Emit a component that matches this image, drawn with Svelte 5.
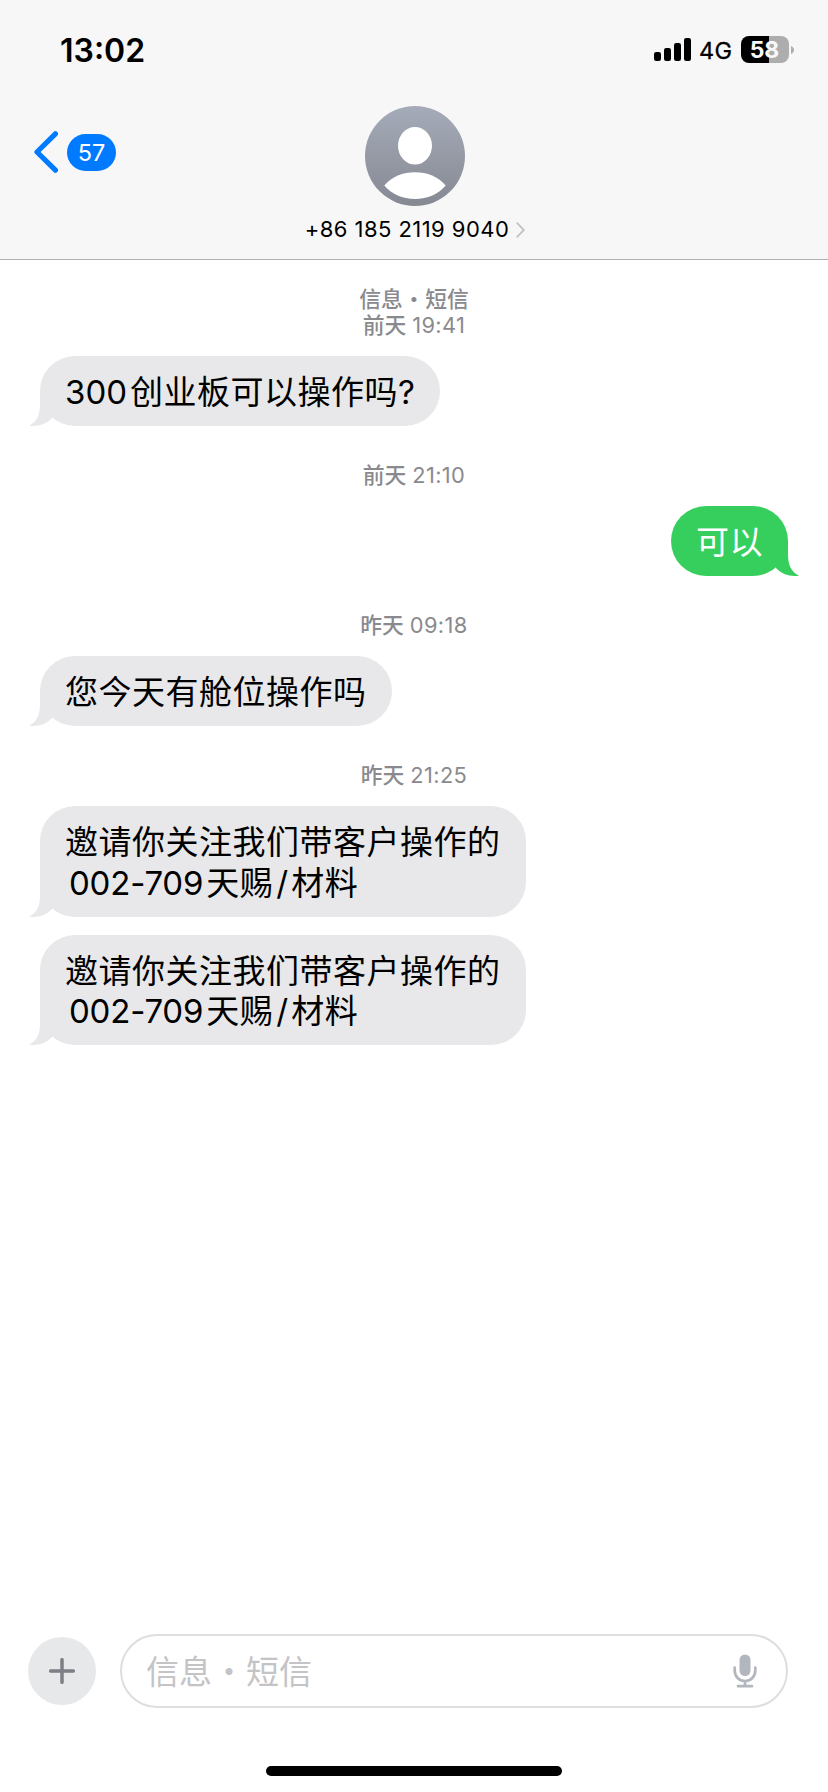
<script lang="ts">
  type Run = { text: string; latin?: boolean; cls?: string };
  type Bubble = { from: "me" | "them"; lines: Run[][] };
  type Group = { service?: string; day: string; time: string; bubbles: Bubble[] };

  const invite: Bubble = {
    from: "them",
    lines: [
      [{ text: "邀请你关注我们带客户操作的" }],
      [
        { text: "002-709", latin: true, cls: "code" },
        { text: "天赐" },
        { text: "/", latin: true, cls: "slash" },
        { text: "材料" },
      ],
    ],
  };

  const groups: Group[] = [
    {
      service: "信息 • 短信",
      day: "前天",
      time: "19:41",
      bubbles: [
        {
          from: "them",
          lines: [
            [
              { text: "300", latin: true, cls: "lead" },
              { text: "创业板可以操作吗" },
              { text: "?", latin: true },
            ],
          ],
        },
      ],
    },
    {
      day: "前天",
      time: "21:10",
      bubbles: [{ from: "me", lines: [[{ text: "可以" }]] }],
    },
    {
      day: "昨天",
      time: "09:18",
      bubbles: [{ from: "them", lines: [[{ text: "您今天有舱位操作吗" }]] }],
    },
    { day: "昨天", time: "21:25", bubbles: [invite, invite] },
  ];

  // bar heights of the signal meter, weakest first
  const bars = [9, 13, 18, 23];
</script>

<div class="screen">
  <header>
    <div class="status">
      <span class="clock">13:02</span>
      <div class="indicators">
        <svg class="signal" width="37" height="23" viewBox="0 0 37 23">
          {#each bars as h, i}
            <rect x={i * 10} y={23 - h} width="7" height={h} rx="2.2" />
          {/each}
        </svg>
        <span class="network">4G</span>
        <div class="battery">
          <span class="level">58</span>
        </div>
        <svg class="nub" width="3" height="8" viewBox="0 0 3 8">
          <path d="M0 0C2 .8 3 2.3 3 4S2 7.2 0 8Z" fill="#adadad" />
        </svg>
      </div>
    </div>

    <div class="nav">
      <button class="back" aria-label="back">
        <svg width="24" height="42" viewBox="0 0 24 42">
          <path
            d="M21.4 2.8L3 21l18.4 18.2"
            fill="none"
            stroke="#007aff"
            stroke-width="5.2"
            stroke-linecap="round"
            stroke-linejoin="round"
          />
        </svg>
        <span class="unread">57</span>
      </button>

      <div class="contact">
        <svg width="100" height="100" viewBox="0 0 100 100">
          <defs>
            <linearGradient id="avatar" x1="0" y1="0" x2="0" y2="1">
              <stop offset="0" stop-color="#a5abb9" />
              <stop offset="1" stop-color="#858992" />
            </linearGradient>
          </defs>
          <circle cx="50" cy="50" r="50" fill="url(#avatar)" />
          <ellipse cx="50" cy="39.8" rx="17" ry="18.8" fill="#fff" />
          <path
            d="M19.3 79.6C26.5 70.5 38 66.2 50 66.2S73.5 70.5 80.7 79.6C73.5 88.3 62.5 93 50 93S26.5 88.3 19.3 79.6Z"
            fill="#fff"
          />
        </svg>
        <div class="number">
          <span>+86 185 2119 9040</span>
          <svg width="9" height="16" viewBox="0 0 9 16">
            <path
              d="M1.2 1.2L7.8 8L1.2 14.8"
              fill="none"
              stroke="#c4c4c6"
              stroke-width="1.9"
              stroke-linecap="round"
              stroke-linejoin="round"
            />
          </svg>
        </div>
      </div>
    </div>
  </header>

  <main>
    {#each groups as group}
      <section>
        <div class="stamp">
          {#if group.service}<div class="service">{group.service}</div>{/if}
          <div>{group.day} <span class="time">{group.time}</span></div>
        </div>
        <div class="stack">
          {#each group.bubbles as bubble}
            <div class="bubble {bubble.from}">
              {#each bubble.lines as line}
                <div class="line">
                  {#each line as run}<span class={run.cls} class:latin={run.latin}>{run.text}</span>{/each}
                </div>
              {/each}
              <svg class="tail" width="26" height="36" viewBox="0 0 26 36">
                <path d="M11 0V14C11 24 8.5 31.5 0 35.7C9 37 17.5 34 23 28L26 0Z" />
              </svg>
            </div>
          {/each}
        </div>
      </section>
    {/each}
  </main>

  <footer>
    <div class="compose">
      <button class="add" aria-label="add">
        <svg width="26" height="26" viewBox="0 0 26 26">
          <path d="M13 1.7V24.3M1.7 13H24.3" stroke="#7e7e85" stroke-width="3.5" stroke-linecap="round" />
        </svg>
      </button>
      <div class="field">
        <span class="placeholder">信息 • 短信</span>
        <svg width="24" height="34" viewBox="0 0 24 34">
          <rect x="6.5" y="0.5" width="11" height="21.5" rx="5.5" fill="#b2b6bd" />
          <path
            d="M1.7 13.5V16.5C1.7 22.6 6 27 12 27S22.3 22.6 22.3 16.5V13.5M12 27V32M5 32.2H19"
            fill="none"
            stroke="#b2b6bd"
            stroke-width="2.7"
            stroke-linecap="round"
          />
        </svg>
      </div>
    </div>
    <div class="home"></div>
  </footer>
</div>

<style>
  :global(body) {
    margin: 0;
    background: #fff;
  }

  .screen {
    display: flex;
    flex-direction: column;
    width: 828px;
    height: 1792px;
    background: #fff;
    color: #000;
    font-family: Inter, "Noto Sans CJK SC", sans-serif;
    overflow: hidden;
  }

  button {
    border: 0;
    padding: 0;
    background: none;
    font: inherit;
  }

  svg {
    display: block;
    flex: none;
  }

  header {
    box-sizing: border-box;
    height: 260px;
    background: #f7f7f7;
    border-bottom: 1px solid #b0b0b1;
  }

  .status {
    display: flex;
    justify-content: space-between;
    align-items: center;
    height: 99px;
    padding: 0 34px 0 60px;
  }

  .clock {
    margin-top: 1px;
    font-size: 32px;
    font-weight: 600;
    letter-spacing: 0;
  }

  .indicators {
    display: flex;
    align-items: center;
  }

  .network {
    width: 32px;
    margin: 2px 10px 0 8px;
    font-size: 23.5px;
    line-height: 28px;
    letter-spacing: 0.4px;
    -webkit-text-stroke: 0.3px #000;
  }

  .battery {
    display: flex;
    justify-content: center;
    align-items: center;
    width: 48px;
    height: 27px;
    border-radius: 8px;
    background: linear-gradient(to right, #000 28px, #adadad 28px);
  }

  .level {
    margin: 1px 1px 0 0;
    color: #f9f9f9;
    font-size: 23px;
    font-weight: 700;
    line-height: 27px;
  }

  .nub {
    margin-left: 2px;
  }

  .nav {
    display: grid;
    grid-template-columns: 1fr auto 1fr;
    padding: 7px 34px 0;
  }

  .back {
    display: flex;
    align-items: center;
    gap: 9px;
    height: 42px;
    margin-top: 25px;
  }

  .unread {
    width: 49px;
    height: 37px;
    border-radius: 19px;
    background: #007aff;
    color: #fff;
    font-size: 23.5px;
    line-height: 37px;
    text-align: center;
  }

  .contact {
    display: flex;
    flex-direction: column;
    align-items: center;
    margin-left: 2px;
  }

  .number {
    display: flex;
    align-items: center;
    gap: 7px;
    margin-top: 10px;
    font-size: 22px;
    line-height: 27px;
    letter-spacing: 0.45px;
  }

  main {
    flex: 1;
    padding: 25px 40px 0;
  }

  section {
    margin-bottom: 35px;
  }

  .stamp {
    margin-bottom: 19px;
    color: #8a8a8e;
    font-family: "Noto Sans CJK SC", sans-serif;
    font-size: 21.8px;
    font-weight: 500;
    line-height: 26px;
    text-align: center;
  }

  .service,
  .placeholder {
    word-spacing: -0.21em;
  }

  .time {
    margin-left: 1px;
    font-family: Inter, sans-serif;
    font-weight: 400;
    line-height: 1;
    letter-spacing: 0.4px;
  }

  .stack {
    display: flex;
    flex-direction: column;
    gap: 18px;
  }

  .bubble {
    position: relative;
    align-self: flex-start;
    padding: 14px 25px 15.5px;
    border-radius: 35px;
    background: #e8e8ea;
    fill: #e8e8ea;
  }

  .bubble.me {
    align-self: flex-end;
    background: #36cf5d;
    fill: #36cf5d;
    color: #fff;
  }

  .line {
    font-family: "Noto Sans CJK SC", sans-serif;
    font-size: 33px;
    line-height: 40.5px;
    letter-spacing: 0.5px;
    white-space: nowrap;
  }

  .latin {
    font-family: Inter, sans-serif;
    line-height: 1;
    letter-spacing: 0;
  }

  .lead {
    margin-right: 3px;
  }

  .code {
    margin: 0 3px 0 4px;
    letter-spacing: -0.2px;
  }

  .slash {
    margin: 0 3px;
  }

  .tail {
    position: absolute;
    left: -11px;
    bottom: 0;
  }

  .me .tail {
    left: auto;
    right: -11px;
    transform: scaleX(-1);
  }

  .compose {
    display: flex;
    align-items: center;
    gap: 24px;
    padding: 0 40px 0 28px;
  }

  .add {
    display: flex;
    justify-content: center;
    align-items: center;
    width: 68px;
    height: 68px;
    border-radius: 50%;
    background: #e6e8ea;
  }

  .field {
    box-sizing: border-box;
    flex: 1;
    display: flex;
    justify-content: space-between;
    align-items: center;
    height: 74px;
    padding: 0 29px 0 24px;
    border: 2px solid #dedede;
    border-radius: 37px;
    color: #c4c4c6;
    font-family: "Noto Sans CJK SC", sans-serif;
    font-size: 33px;
    line-height: 41px;
  }

  .placeholder {
    margin-bottom: 2px;
  }

  .home {
    width: 296px;
    height: 10px;
    margin: 58px auto 16px;
    border-radius: 5px;
    background: #000;
  }
</style>
